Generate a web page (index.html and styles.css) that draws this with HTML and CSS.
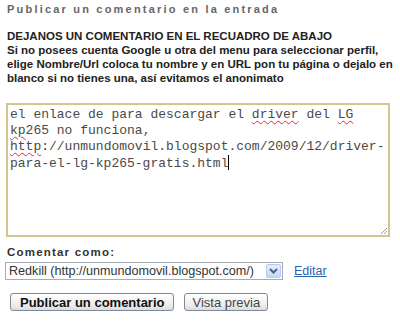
FILE: index.html
```html
<!DOCTYPE html>
<html lang="es">
<head>
  <meta charset="UTF-8">
  <title>Publicar un comentario</title>
  <link rel="stylesheet" href="styles.css">
</head>
<body>
  <h4 class="form-title">Publicar un comentario en la entrada</h4>

  <p class="form-note">
    DEJANOS UN COMENTARIO EN EL RECUADRO DE ABAJO<br>
    Si no posees cuenta Google u otra del menu para seleccionar perfil,<br>
    elige Nombre/Url coloca tu nombre y en URL pon tu página o dejalo en<br>
    blanco si no tienes una, así evitamos el anonimato
  </p>

  <div class="comment-box">
    <div class="line">el enlace de para descargar el <span class="typo">driver</span> del <span class="typo">LG</span></div>
    <div class="line"><span class="typo">kp</span>265 no funciona,</div>
    <div class="line"><span class="typo">http</span>://unmundomovil.blogspot.com/2009/12/driver-</div>
    <div class="line">para-el-lg-kp265-gratis.html<span class="caret"></span></div>
    <svg class="grip" width="9" height="9" viewBox="0 0 9 9">
      <path d="M8 2 L2 8 M8 5 L5 8" stroke="#999" stroke-width="1" fill="none"/>
    </svg>
  </div>

  <div class="identity">
    <div class="identity-label">Comentar como:</div>
    <div class="identity-row">
      <div class="select">
        <span class="select-text">Redkill (http://unmundomovil.blogspot.com/)</span>
        <span class="select-arrow">
          <svg width="9" height="6" viewBox="0 0 9 6">
            <path d="M1 1 L4.5 4.5 L8 1" stroke="#4d6185" stroke-width="2" fill="none"/>
          </svg>
        </span>
      </div>
      <a class="edit-link" href="#">Editar</a>
    </div>
  </div>

  <div class="actions">
    <button class="btn btn-main">Publicar un comentario</button>
    <button class="btn">Vista previa</button>
  </div>
</body>
</html>
```

FILE: styles.css
```css
* {
  box-sizing: border-box;
  margin: 0;
  padding: 0;
}

body {
  background: #fff;
  font-family: 'Liberation Sans', Arial, sans-serif;
  font-size: 11px;
  color: #222;
  padding: 2px 6px 0;
}

.form-title {
  font-size: 11px;
  line-height: 14px;
  font-weight: bold;
  color: #666;
  letter-spacing: 2.2px;
  padding-left: 1px;
}

.form-note {
  margin-top: 13px;
  font-size: 11.5px;
  font-weight: bold;
  line-height: 14px;
  white-space: nowrap;
  padding-left: 1px;
}

.comment-box {
  position: relative;
  margin-top: 18px;
  width: 384px;
  height: 134px;
  border: 2px solid #d4c48e;
  padding: 2px;
  font-family: 'Liberation Mono', 'Courier New', monospace;
  font-size: 13px;
  line-height: 16px;
  color: #4a4a4a;
}

.line {
  white-space: pre;
}

.typo {
  text-decoration: underline wavy #e03030;
  text-decoration-thickness: 1px;
  text-underline-offset: 2px;
}

.caret {
  display: inline-block;
  width: 1px;
  height: 15px;
  background: #000;
  vertical-align: -3px;
}

.grip {
  position: absolute;
  right: 0;
  bottom: 0;
}

.identity {
  margin-top: 8px;
}

.identity-label {
  font-size: 11.5px;
  font-weight: bold;
  color: #333;
  letter-spacing: 1.2px;
  line-height: 14px;
  padding-left: 1px;
}

.identity-row {
  display: flex;
  align-items: center;
  margin-top: 3px;
}

.select {
  display: flex;
  align-items: center;
  justify-content: space-between;
  width: 278px;
  height: 18px;
  margin-left: -1px;
  border: 1px solid #a5acb5;
  padding: 0 1px 0 3px;
  font-size: 12.6px;
  color: #333;
}

.select-arrow {
  display: flex;
  align-items: center;
  justify-content: center;
  width: 15px;
  height: 14px;
  border: 1px solid #b9c9ef;
  border-radius: 2px;
  background: linear-gradient(#e6eefc, #c6d6f7);
}

.edit-link {
  margin-left: 11px;
  font-size: 12.5px;
  color: #2a62b0;
  text-decoration: underline;
}

.actions {
  display: flex;
  gap: 10px;
  margin-top: 13px;
  padding-left: 4px;
}

.btn {
  height: 18px;
  padding: 0 7px;
  font-family: 'Liberation Sans', Arial, sans-serif;
  font-size: 13px;
  color: #444;
  border: 1px solid #7c8a9c;
  border-radius: 3px;
  background: linear-gradient(#ffffff, #ececec 70%, #dcdcdc);
}

.btn-main {
  font-weight: bold;
  color: #111;
  padding: 0 9px;
}
```
